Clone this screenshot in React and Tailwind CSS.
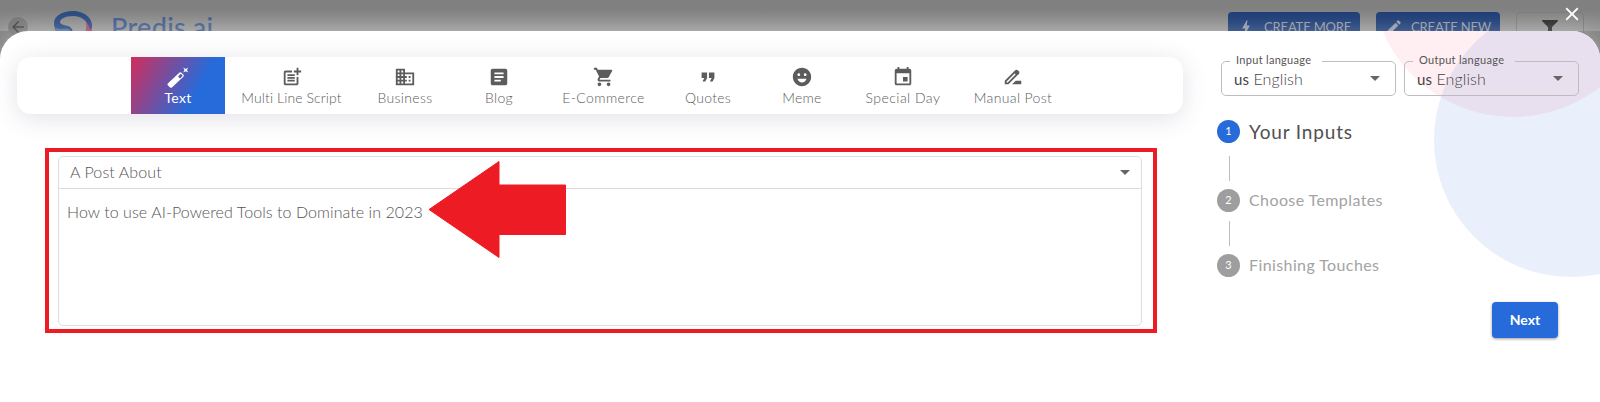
import React from 'react';
import {
    MdArrowBack,
    MdArrowDropDown,
    MdArticle,
    MdBolt,
    MdClose,
    MdDomain,
    MdDriveFileRenameOutline,
    MdEdit,
    MdEmojiEmotions,
    MdEvent,
    MdFormatQuote,
    MdPostAdd,
    MdShoppingCart,
} from 'react-icons/md';
import { FaFilter } from 'react-icons/fa';

const WandIcon = ({ className }) => (
    <svg className={className} viewBox="0 0 22 22" fill="currentColor">
        <path
            fillRule="evenodd"
            d="M.8 17.6 12.2 6.7c.7-.7 1.5-.7 2.2 0l1.9 1.9c.7.7.7 1.5 0 2.2L4.9 21.4c-.6.6-1.2.6-1.8 0L.8 19.2c-.5-.5-.5-1.1 0-1.6ZM13.2 8.2l-1.7 1.7c-.4.4-.4.7 0 1.1l.9.9c.4.4.7.4 1.1 0l1.7-1.7c.4-.4.4-.7 0-1.1l-.9-.9c-.4-.4-.7-.4-1.1 0Z"
        />
        <path d="m16.2 1.6 2.5 1.3 2.5-1.3-1.3 2.5 1.3 2.5-2.5-1.3-2.5 1.3 1.3-2.5Z" />
    </svg>
);

const tabs = [
    { label: 'Text', icon: WandIcon, width: 'w-[94px]', tracking: 'tracking-[0.3px]', active: true },
    { label: 'Multi Line Script', icon: MdPostAdd, width: 'w-[133px]', tracking: 'tracking-[0.1px]' },
    { label: 'Business', icon: MdDomain, width: 'w-[94px]', tracking: 'tracking-[0.35px]' },
    { label: 'Blog', icon: MdArticle, width: 'w-[94px]', tracking: 'tracking-[0.35px]' },
    { label: 'E-Commerce', icon: MdShoppingCart, width: 'w-[115px]', tracking: 'tracking-[0.4px]' },
    { label: 'Quotes', icon: MdFormatQuote, width: 'w-[94px]', tracking: 'tracking-[0.3px]' },
    { label: 'Meme', icon: MdEmojiEmotions, width: 'w-[94px]', tracking: 'tracking-[0.25px]' },
    { label: 'Special Day', icon: MdEvent, width: 'w-[108px]', tracking: 'tracking-[0.45px]' },
    { label: 'Manual Post', icon: MdDriveFileRenameOutline, width: 'w-[112px]', tracking: 'tracking-[0.35px]' },
];

const App = () => {
    return (
        <div className="relative h-[402px] w-[1600px] overflow-hidden bg-[#808080] font-['Lato','Open_Sans',sans-serif] text-[#666]">
            <PageHeader />

            <div className="relative flex h-[371px] overflow-hidden rounded-t-[28px] bg-white shadow-[0_0_24px_rgba(255,255,255,0.35)]">
                {/* Decorative circles */}
                <div className="absolute -top-[198px] left-[1371px] h-[284px] w-[284px] rounded-full bg-[#ffeef2]" />
                <div className="absolute -top-[28px] left-[1434px] h-[274px] w-[274px] rounded-full bg-[#266bd9]/10" />

                <main className="w-[1200px] pt-[26px] pl-[17px]">
                    <TypeTabs />
                    <PostForm />
                </main>
                <Sidebar />
            </div>

            <MdClose className="absolute top-[3px] left-[1561px] h-[22px] w-[22px] text-white" />
        </div>
    );
};

const PageHeader = () => (
    <header className="flex h-[31px] items-start bg-gradient-to-b from-[#808080] from-30% to-[#969696]">
        <div className="mt-[17px] ml-2 flex h-5 w-5 shrink-0 items-center justify-center rounded-full bg-[#777]">
            <MdArrowBack className="h-[18px] w-[18px] text-[#444]" />
        </div>
        <svg className="mt-[10px] ml-[25px] h-7 w-10 shrink-0" viewBox="0 0 40 28">
            <path d="M32 9c6 5 9 11 6 17l-3 2h-8c6-5 8-11 5-19Z" fill="#a54462" />
            <path d="M1 13C1 6 9 1 20 1s20 7 19 16c0 1-1 2-2 3C36 12 29 6 20 6 12 6 7 9 7 12c0 4 9 2 12 7 1 2 1 5 0 9H8C4 24 1 19 1 13Z" fill="#29497f" />
            <path d="M2 17c3 4 11 0 15 3 2 2 2 5 2 8H8c-3-3-5-7-6-11Z" fill="#50709f" />
        </svg>
        <div className="mt-[11px] ml-[18px] w-[110px] text-[27px] leading-[32px] font-medium tracking-[0.3px] text-[#3d598c]">Predis.ai</div>
        <div className="mt-3 ml-[1007px] flex h-9 w-[132px] shrink-0 items-center rounded bg-[#1c3c75] pl-[9px] text-[13px] leading-none text-[#9299a5]">
            <div className="-mt-[6px] flex items-center gap-[9px] whitespace-nowrap">
                <MdBolt className="h-[18px] w-[18px]" />
                <span className="tracking-[-0.15px]">CREATE MORE</span>
            </div>
        </div>
        <div className="mt-3 ml-4 flex h-9 w-[124px] shrink-0 items-center rounded bg-[#1c3c75] pl-[9px] text-[13px] leading-none text-[#9299a5]">
            <div className="-mt-[6px] flex items-center gap-[8px] whitespace-nowrap">
                <MdEdit className="h-[18px] w-[18px]" />
                <span className="tracking-[-0.15px]">CREATE NEW</span>
            </div>
        </div>
        <div className="mt-3 ml-4 flex h-9 w-[68px] shrink-0 justify-center rounded border border-[#7b7b7b] pt-[7px]">
            <FaFilter className="h-4 w-4 text-[#292929]" />
        </div>
    </header>
);

const TypeTabs = () => (
    <nav className="flex h-[57px] w-[1166px] rounded-[14px] bg-white pl-[114px] shadow-[0_4px_24px_rgba(70,70,110,0.16)]">
        {tabs.map((tab) => (
            <button
                key={tab.label}
                className={`${tab.width} ${tab.tracking} ${tab.active ? 'bg-linear-[118deg,#d22d5b_0%,#266bd9_68%] font-normal text-white' : 'font-light text-[#5c5c5c]'} flex shrink-0 flex-col items-center pt-[9px] text-[14px] leading-[20px]`}
            >
                <tab.icon className={`h-[22px] w-[22px] shrink-0 ${tab.active ? 'text-white' : 'text-[#5c5c5c]'}`} />
                <span className="whitespace-nowrap">{tab.label}</span>
            </button>
        ))}
    </nav>
);

const PostForm = () => (
    <section className="relative mt-[34px] ml-[28px] h-[185px] w-[1112px] border-4 border-[#ed1c24] pt-[4px] pl-[9px]">
        <div className="h-[170px] w-[1084px] rounded-[5px] border border-[#dedede] font-light text-[#555]">
            <div className="flex h-[32px] items-center justify-between border-b border-[#dcdcdc] pr-[4px] pl-[11px] text-[16px] tracking-[0.1px]">
                <span className="-mt-[2px]">A Post About</span>
                <MdArrowDropDown className="-mt-[1px] h-6 w-6 text-[#666]" />
            </div>
            <p className="pt-[11px] pl-[8px] text-[16px] leading-6 tracking-[0.07px]">How to use AI-Powered Tools to Dominate in 2023</p>
        </div>
        {/* Callout arrow pointing at the prompt */}
        <svg className="absolute top-[8px] left-[379px] h-[100px] w-[141px]" viewBox="0 0 141 100">
            <path d="M1 49.5L71 1.5V25H137.5V74.5H71V97.5Z" fill="#ed1c24" stroke="#ed1c24" strokeLinejoin="round" />
        </svg>
    </section>
);

const LanguageSelect = ({ label, legendWidth }) => (
    <fieldset className="h-[41px] w-[175px] rounded-[5px] border border-[#bdbdbd] pl-2">
        <legend className={`${legendWidth} h-3 px-[6px] text-[11px] leading-[10px] tracking-[0.3px] whitespace-nowrap text-[#555]`}>{label}</legend>
        <div className="-mt-[2px] flex items-center justify-between pr-2 pl-1 text-[16px]">
            <span className="mt-[2px] font-light tracking-[0.1px] text-[#444]">
                <span className="text-[15px] font-normal">us</span> English
            </span>
            <MdArrowDropDown className="h-6 w-6 text-[#666]" />
        </div>
    </fieldset>
);

const Step = ({ number, label, active }) => (
    <div className="flex h-[23px] items-center gap-[9px]">
        <span className={`flex h-[23px] w-[23px] items-center justify-center rounded-full text-[11px] text-white ${active ? 'bg-[#266bd9]' : 'bg-[#9e9e9e]'}`}>
            {number}
        </span>
        <span className={active ? 'mt-[2px] text-[19px] tracking-[0.85px] text-[#505050]' : '-mt-[1px] text-[16px] tracking-[0.4px] text-[#a3a3a3]'}>{label}</span>
    </div>
);

const Sidebar = () => (
    <aside className="relative w-[400px] pt-[24px] pl-[17px]">
        <div className="flex gap-2 pl-1">
            <LanguageSelect label="Input language" legendWidth="w-[92px]" />
            <LanguageSelect label="Output language" legendWidth="w-[102px]" />
        </div>
        <div className="mt-[24px]">
            <Step number={1} label="Your Inputs" active />
            <div className="mt-[13px] mb-[8px] ml-3 h-[25px] w-px bg-[#bdbdbd]" />
            <Step number={2} label="Choose Templates" />
            <div className="mt-[9px] mb-[8px] ml-3 h-[25px] w-px bg-[#bdbdbd]" />
            <Step number={3} label="Finishing Touches" />
        </div>
        <button className="mt-[25px] ml-[275px] h-9 w-[66px] rounded bg-[#266bd9] pb-[2px] text-[14px] font-bold text-white shadow-[0_1px_3px_rgba(0,0,0,0.4)]">
            Next
        </button>
    </aside>
);

export default App;
